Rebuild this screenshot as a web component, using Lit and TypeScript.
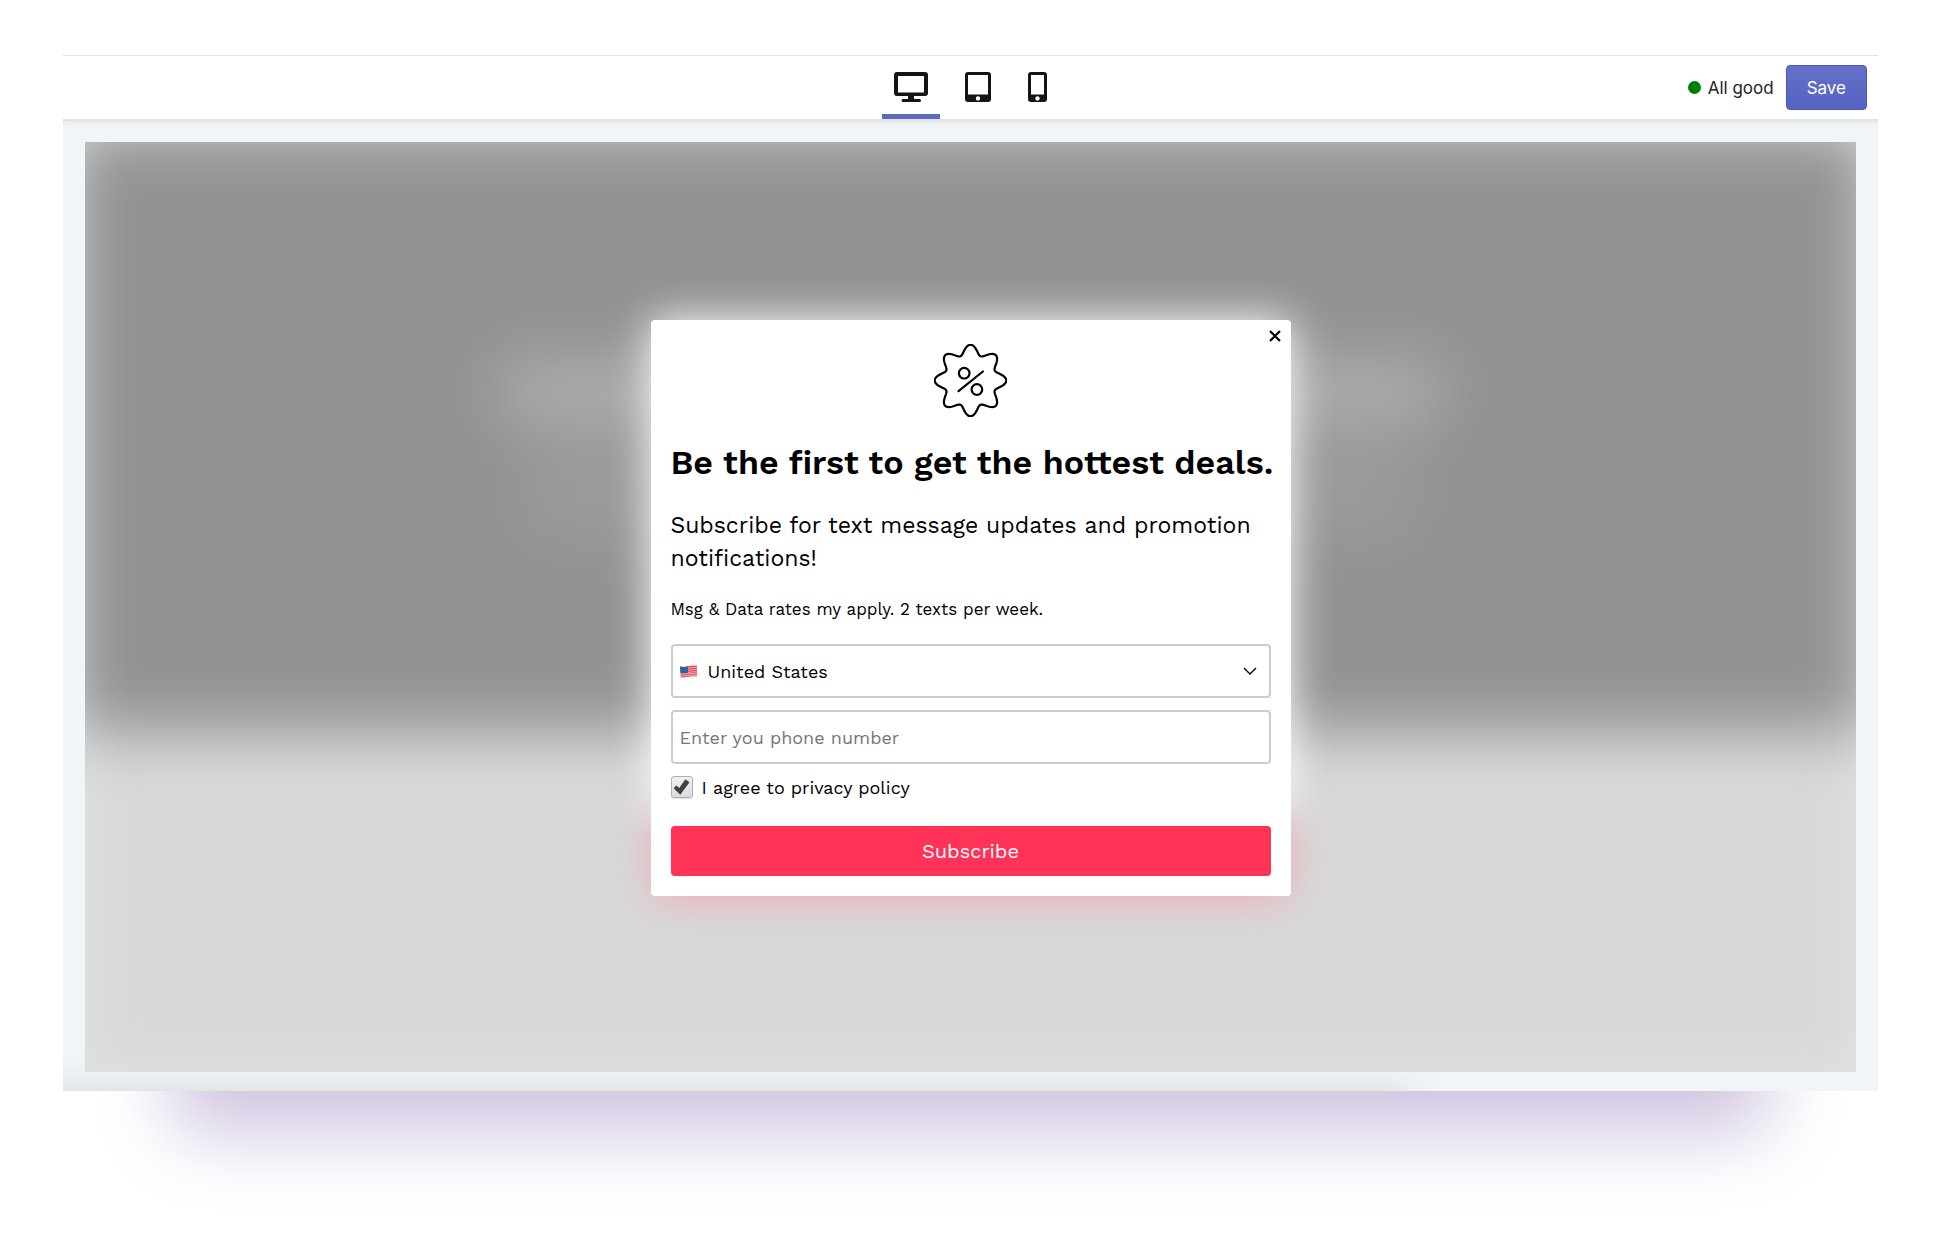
import { LitElement, html, css, svg } from "lit";
import { customElement, property, state } from "lit/decorators.js";

const BADGE_PATH = (() => {
  const steps = 192;
  const points: string[] = [];
  for (let i = 0; i < steps; i++) {
    const a = (i / steps) * Math.PI * 2;
    const r = 31 + 4.8 * Math.cos(8 * a);
    points.push(`${(r * Math.sin(a)).toFixed(2)} ${(-r * Math.cos(a)).toFixed(2)}`);
  }
  return `M${points.join("L")}Z`;
})();

type Device = "desktop" | "tablet" | "phone";

const DEVICES: { id: Device; label: string; width: number; art: unknown }[] = [
  {
    id: "desktop",
    label: "Desktop preview",
    width: 34,
    art: svg`<path fill-rule="evenodd" d="M3 0h28a3 3 0 0 1 3 3v18a3 3 0 0 1-3 3H20v3h5.500a1.500 1.500 0 0 1 0 3h-16.500a1.500 1.500 0 0 1 0-3H14v-3H3a3 3 0 0 1-3-3V3a3 3 0 0 1 3-3zM4 4v16.500h26V4z"/>`,
  },
  {
    id: "tablet",
    label: "Tablet preview",
    width: 26,
    art: svg`<path fill-rule="evenodd" d="M3 0h20a3 3 0 0 1 3 3v24a3 3 0 0 1-3 3H3a3 3 0 0 1-3-3V3a3 3 0 0 1 3-3zM3 3v19.500h20V3zM13 24.200a2.200 2.200 0 1 0 0 4.400a2.200 2.200 0 1 0 0-4.400z"/>`,
  },
  {
    id: "phone",
    label: "Phone preview",
    width: 19,
    art: svg`<path fill-rule="evenodd" d="M3 0h13a3 3 0 0 1 3 3v24a3 3 0 0 1-3 3H3a3 3 0 0 1-3-3V3a3 3 0 0 1 3-3zM3 3v19.500h13V3zM9.500 24.200a2.200 2.200 0 1 0 0 4.400a2.200 2.200 0 1 0 0-4.400z"/>`,
  },
];

@customElement("preview-toolbar")
class PreviewToolbar extends LitElement {
  @property() device: Device = "desktop";

  static styles = css`
    :host {
      display: block;
    }
    .bar {
      display: grid;
      grid-template-columns: 1fr auto 1fr;
      align-items: center;
      height: 63px;
      background: #fff;
      border-top: 1px solid #dfe1e6;
      border-bottom: 2px solid #dfe1e3;
    }
    .devices {
      grid-column: 2;
      align-self: stretch;
      display: flex;
      gap: 13px;
    }
    .device {
      display: flex;
      align-items: flex-start;
      padding: 16px 12px 0;
      border: 0;
      border-bottom: 5px solid transparent;
      background: none;
      cursor: pointer;
    }
    .device.active {
      border-bottom-color: #5c6ac4;
    }
    .device svg {
      display: block;
      fill: #151515;
    }
    .actions {
      display: flex;
      justify-content: flex-end;
      align-items: center;
      padding-right: 11px;
      font-family: Inter, "Liberation Sans", sans-serif;
      font-size: 17px;
      color: #212326;
    }
    .dot {
      width: 13px;
      height: 13px;
      margin-right: 7px;
      border-radius: 50%;
      background: #008000;
    }
    .save {
      height: 45px;
      margin-left: 12px;
      padding: 0 20px;
      border: 1px solid #4a58b8;
      border-radius: 4px;
      background: linear-gradient(#6571c7, #5563c1);
      color: #fff;
      font: inherit;
      cursor: pointer;
    }
  `;

  private pick(id: Device) {
    this.dispatchEvent(new CustomEvent("device-change", { detail: id }));
  }

  render() {
    return html`
      <header class="bar">
        <nav class="devices" aria-label="Preview size">
          ${DEVICES.map(
            (d) => html`<button
              type="button"
              class="device ${d.id === this.device ? "active" : ""}"
              aria-label=${d.label}
              aria-pressed=${d.id === this.device ? "true" : "false"}
              @click=${() => this.pick(d.id)}
            >
              <svg width=${d.width} height="30" viewBox="0 0 ${d.width} 30">${d.art}</svg>
            </button>`
          )}
        </nav>
        <div class="actions">
          <span class="dot"></span>
          <span>All good</span>
          <button type="button" class="save">Save</button>
        </div>
      </header>
    `;
  }
}

@customElement("subscribe-popup")
class SubscribePopup extends LitElement {
  static styles = css`
    :host {
      display: block;
      position: relative;
      z-index: 1;
      width: 640px;
      max-width: 100%;
      font-family: "Work Sans", Inter, "Open Sans", sans-serif;
      color: #000;
    }
    .glow {
      position: absolute;
      z-index: -1;
      filter: blur(22px);
    }
    .glow-light {
      inset: 0 0 90px;
      background: #fff;
    }
    .glow-accent {
      inset: auto 4px 0;
      height: 80px;
      background: rgba(255, 140, 158, 0.65);
    }
    .card {
      position: relative;
      box-sizing: border-box;
      padding: 24px 20px 20px;
      border-radius: 4px;
      background: #fff;
    }
    .close {
      position: absolute;
      top: 4px;
      right: 4px;
      width: 24px;
      height: 24px;
      padding: 0;
      border: 0;
      background: none;
      cursor: pointer;
    }
    svg {
      display: block;
      fill: none;
      stroke: #000;
    }
    .badge {
      margin: 0 auto;
      stroke-width: 2.2;
      stroke-linecap: round;
      stroke-linejoin: round;
    }
    .title {
      margin: 20px 0 22px;
      font-size: 34px;
      line-height: 50px;
      font-weight: 600;
      white-space: nowrap;
    }
    .lead {
      margin: 0 0 22px;
      font-size: 23px;
      line-height: 33px;
    }
    .note {
      margin: 0 0 22px;
      font-size: 17px;
      line-height: 25px;
    }
    .field {
      display: grid;
      align-items: center;
      margin-bottom: 12px;
    }
    .field > * {
      grid-area: 1 / 1;
    }
    .control {
      box-sizing: border-box;
      width: 100%;
      height: 54px;
      padding: 0 7px;
      border: 2px solid #ccc;
      border-radius: 4px;
      background: #fff;
      color: #000;
      font: inherit;
      font-size: 18px;
      appearance: none;
    }
    .country {
      padding-left: 35px;
    }
    .control::placeholder {
      color: #757575;
      opacity: 1;
    }
    .flag,
    .chevron {
      z-index: 1;
      pointer-events: none;
    }
    .flag {
      margin-left: 9px;
      stroke: none;
    }
    .chevron {
      justify-self: end;
      margin-right: 14px;
      stroke-width: 1.4;
    }
    .consent {
      display: flex;
      align-items: center;
      gap: 9px;
      height: 22px;
      margin-bottom: 28px;
      font-size: 18px;
    }
    .tick {
      display: grid;
      place-items: center;
      box-sizing: border-box;
      width: 22px;
      height: 22px;
      margin: 0;
      border: 1px solid #b0b0b0;
      border-radius: 3px;
      background: linear-gradient(#f0f0f0, #dcdcdc);
      box-shadow: 0 1px 1px rgba(0, 0, 0, 0.15);
      appearance: none;
    }
    .tick:checked::before {
      content: "";
      width: 16px;
      height: 16px;
      background: #404040;
      clip-path: polygon(0 58%, 18% 40%, 36% 56%, 74% 2%, 100% 20%, 42% 98%);
    }
    .submit {
      display: block;
      width: 100%;
      height: 50px;
      border: 0;
      border-radius: 4px;
      background: #ff3357;
      color: #fff;
      font: inherit;
      font-size: 20px;
      cursor: pointer;
    }
  `;

  render() {
    return html`
      <div class="glow glow-accent"></div>
      <div class="glow glow-light"></div>
      <form class="card" @submit=${(e: Event) => e.preventDefault()}>
        <button type="button" class="close" aria-label="Close">
          <svg width="24" height="24" viewBox="0 0 24 24" stroke-width="2.200">
            <path d="M7 7l10 10M17 7L7 17" />
          </svg>
        </button>
        <svg class="badge" width="73" height="73" viewBox="-36.500 -36.500 73 73">
          <path d=${BADGE_PATH} />
          <circle cx="-6.300" cy="-7.300" r="5.300" />
          <circle cx="6.400" cy="9" r="5.300" />
          <path d="M-12 10.700L12.400-9" />
        </svg>
        <h1 class="title">Be the first to get the hottest deals.</h1>
        <p class="lead">Subscribe for text message updates and promotion notifications!</p>
        <p class="note">Msg &amp; Data rates my apply. 2 texts per week.</p>
        <div class="field">
          <select class="control country" aria-label="Country">
            <option>United States</option>
          </select>
          <svg class="flag" width="17" height="13" viewBox="0 0 17 13">
            <path fill="#e2505f" d="M0 1.500Q4 2.500 8 1.200T17 .8V11.500Q13 10.800 9 11.800T.8 12.500z" />
            <path
              stroke="#f2b9bf"
              stroke-width=".8"
              d="M8 3.200Q12 1.800 17 2.600M8 5.400Q12 4 17 4.800M8 7.600Q12 6.200 17 7M.8 9Q5 9.400 9 8.600T17 9M.8 11Q5 11.400 9 10.400T17 10.800"
            />
            <path fill="#2d62a8" d="M0 1.500Q4 2.500 8 1.200V7.400Q4 8.500.5 7.800z" />
          </svg>
          <svg class="chevron" width="14" height="8" viewBox="0 0 14 8"><path d="M1 1l6 6 6-6" /></svg>
        </div>
        <div class="field">
          <input class="control" type="tel" placeholder="Enter you phone number" aria-label="Phone number" />
        </div>
        <div class="consent">
          <input class="tick" id="agree" type="checkbox" checked />
          <label for="agree">I agree to privacy policy</label>
        </div>
        <button type="submit" class="submit">Subscribe</button>
      </form>
    `;
  }
}

@customElement("app-root")
class AppRoot extends LitElement {
  @state() private device: Device = "desktop";

  static styles = css`
    :host {
      display: flex;
      flex-direction: column;
      box-sizing: border-box;
      min-height: 100vh;
      padding: 55px 64px 142px 63px;
      background: #fff;
    }
    .frame {
      flex: 1;
      display: flex;
      flex-direction: column;
      box-shadow: 0 150px 74px -110px #cdc2df;
    }
    .stage {
      flex: 1;
      display: flex;
      position: relative;
      overflow: hidden;
      padding: 21px 22px 19px;
      background: #f1f5f8;
      box-shadow: inset 0 4px 4px -2px rgba(0, 0, 0, 0.06);
    }
    .stage::before {
      content: "";
      position: absolute;
      left: -40px;
      right: 26%;
      bottom: -30px;
      height: 30px;
      box-shadow: 0 0 32px rgba(190, 195, 185, 0.65);
    }
    .canvas {
      flex: 1;
      display: grid;
      place-items: center;
      position: relative;
      overflow: hidden;
      padding-top: 2px;
      background: #e6e9ea;
    }
    .backdrop {
      position: absolute;
      inset: -16px;
      display: flex;
      flex-direction: column;
      filter: blur(31px);
      background: #d8d8d8;
    }
    .hero {
      box-sizing: border-box;
      flex: 0 0 63%;
      display: flex;
      flex-direction: column;
      align-items: center;
      justify-content: center;
      gap: 20px;
      padding-top: 44px;
      background: #929294;
    }
    .headline {
      width: 52%;
      height: 54px;
      background: #b2b2b4;
    }
    .copy {
      width: 49%;
      height: 100px;
      background: #9b9b9d;
    }
  `;

  render() {
    return html`
      <main class="frame">
        <preview-toolbar
          .device=${this.device}
          @device-change=${(e: CustomEvent<Device>) => (this.device = e.detail)}
        ></preview-toolbar>
        <section class="stage">
          <div class="canvas">
            <div class="backdrop">
              <div class="hero">
                <div class="headline"></div>
                <div class="copy"></div>
              </div>
            </div>
            <subscribe-popup></subscribe-popup>
          </div>
        </section>
      </main>
    `;
  }
}
